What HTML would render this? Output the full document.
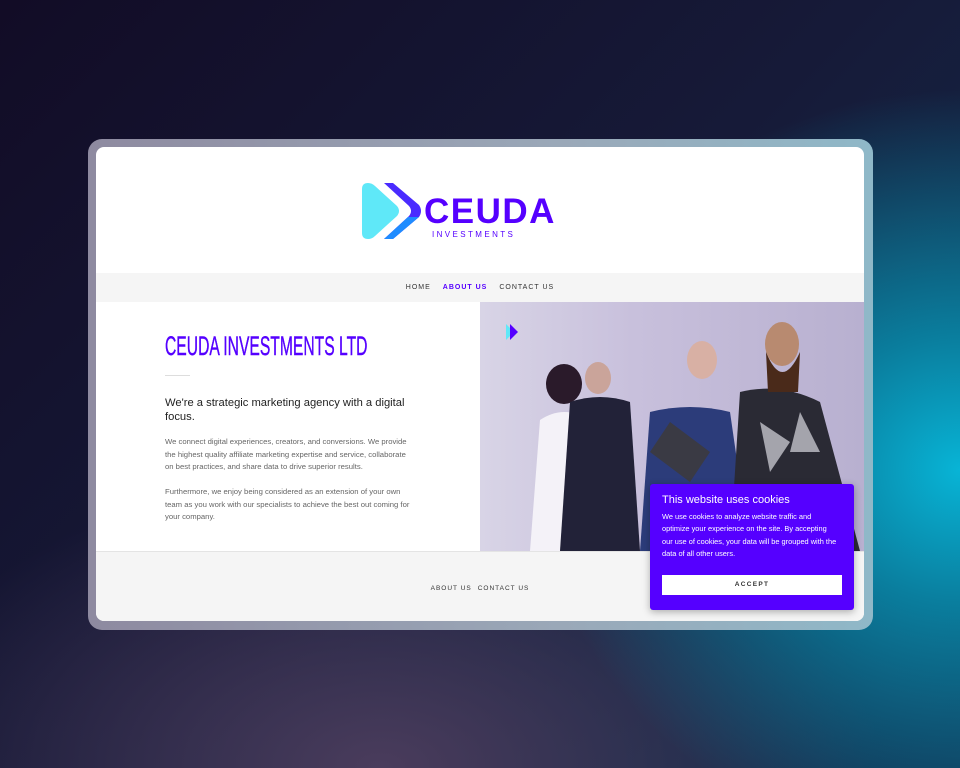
<!DOCTYPE html>
<html><head><meta charset="utf-8"><style>
*{margin:0;padding:0;box-sizing:border-box}
body{width:960px;height:768px;overflow:hidden;font-family:"Liberation Sans",sans-serif;
background:radial-gradient(ellipse 420px 380px at 960px 470px,#08b4d6 0%,#0a7e9e 35%,rgba(16,40,70,0) 100%),radial-gradient(ellipse 500px 300px at 380px 768px,#4a3c5c 0%,rgba(40,30,60,0) 100%),linear-gradient(135deg,#120c26 0%,#161a38 50%,#123050 100%);position:relative}
.frame{position:absolute;left:88px;top:139px;width:785px;height:491px;border-radius:14px;background:linear-gradient(90deg,#8e8aa0,#9aa8b8 60%,#8fb8c8)}
.page{position:absolute;left:96px;top:147px;width:768px;height:474px;border-radius:8px;background:#fff;overflow:hidden}
.nav{position:absolute;top:126px;left:0;width:768px;height:29px;background:#f5f5f5;font-size:7px;letter-spacing:1px;color:#333;text-align:center;line-height:29px}
.nav span{margin:0 6px}
h1{position:absolute;left:69px;top:184px;font-family:"Liberation Sans Narrow","Liberation Sans",sans-serif;font-weight:normal;color:#5500ff;font-size:27px;transform:scaleX(.58);transform-origin:left;white-space:nowrap;-webkit-text-stroke:.4px #5500ff}
.rule{position:absolute;left:69px;top:228px;width:25px;height:1px;background:#ddd}
.lead{position:absolute;left:69px;top:249px;width:250px;font-size:11.2px;line-height:14px;color:#222}
.p{position:absolute;left:69px;width:250px;font-size:7.7px;line-height:12.5px;color:#666}
.photo{position:absolute;left:384px;top:155px;width:384px;height:249px;background:linear-gradient(90deg,#d8d4e6,#c8c0dc 40%,#b8b0d0);overflow:hidden}
.foot{position:absolute;top:404px;left:0;width:768px;height:70px;background:#f5f5f5;border-top:1px solid #e4e4e4;font-size:6.5px;letter-spacing:1px;color:#333;text-align:center;line-height:74px}
.cookie{position:absolute;left:650px;top:484px;width:204px;height:126px;background:#5500ff;border-radius:3px;color:#fff;padding:10px 16px 10px 12px;box-shadow:0 2px 8px rgba(0,0,0,.3)}
.cookie h3{font-weight:normal;font-size:11px;margin-bottom:5px}
.cookie p{font-size:7.4px;line-height:12.3px}
.btn{position:absolute;left:12px;top:91px;width:180px;height:20px;background:#fff;color:#333;font-size:6.5px;font-weight:bold;letter-spacing:1.3px;text-align:center;line-height:20px}
</style></head><body>
<div class="frame"></div>
<div class="page">
 <svg style="position:absolute;left:266px;top:36px" width="200" height="56" viewBox="0 0 200 56">
  <path d="M6 0q4 0 7 3l22 20q4 5 0 10L13 53q-3 3-7 3q-6 0-6-6V6q0-6 6-6z" fill="#5fe8f8"/>
  <path d="M22 0h9l26 22q4 6 0 12L31 56h-9l25-23q4-5 0-10z" fill="#4a2bff"/>
  <path d="M22 56l24-22h11L31 56z" fill="#1f8cff"/>
  <text x="62" y="40" font-family="Liberation Sans" font-weight="bold" font-size="35" letter-spacing="1.5" fill="#5500ff">CEUDA</text>
  <text x="70" y="54" font-family="Liberation Sans" font-size="8" letter-spacing="2.4" fill="#5500ff">INVESTMENTS</text>
 </svg>
 <div class="nav"><span>HOME</span><span style="color:#5500ff;font-weight:bold">ABOUT US</span><span>CONTACT US</span></div>
 <h1>CEUDA INVESTMENTS LTD</h1>
 <div class="rule"></div>
 <div class="lead">We're a strategic marketing agency with a digital focus.</div>
 <div class="p" style="top:289px">We connect digital experiences, creators, and conversions. We provide the highest quality affiliate marketing expertise and service, collaborate on best practices, and share data to drive superior results.</div>
 <div class="p" style="top:339px">Furthermore, we enjoy being considered as an extension of your own team as you work with our specialists to achieve the best out coming for your company.</div>
 <div class="photo">
  <svg width="384" height="249" viewBox="0 0 384 249">
   <path d="M26 22l8 8-8 8z" fill="#5fe8f8"/><path d="M30 22l8 8-8 8z" fill="#5500ff"/>
   <ellipse cx="84" cy="82" rx="18" ry="20" fill="#2a1a2a"/>
   <path d="M60 118q24-16 50 0l6 131H50z" fill="#f4f2f8"/>
   <path d="M90 100q30-10 60 0l10 149H80z" fill="#222238"/>
   <ellipse cx="118" cy="76" rx="13" ry="16" fill="#caa49a"/>
   <path d="M170 110q40-10 80 0l20 139H160z" fill="#2c3c7a"/>
   <ellipse cx="222" cy="58" rx="15" ry="19" fill="#d8b0a4"/>
   <path d="M260 90q40-10 80 10l40 149H250z" fill="#2a2a34"/>
   <path d="M280 120l30 20-20 30z M320 110l20 40-30 0z" fill="#d8d8e0" opacity=".7"/>
   <ellipse cx="302" cy="42" rx="17" ry="22" fill="#b88a70"/>
   <path d="M286 50q16 40 34 0l-2 40h-30z" fill="#4a2a1a"/>
   <path d="M190 120l40 30-20 30-40-30z" fill="#3a3a44"/>
  </svg>
 </div>
 <div class="foot"><span style="margin:0 3px">ABOUT US</span><span style="margin:0 3px">CONTACT US</span></div>
</div>
<div class="cookie"><h3>This website uses cookies</h3><p>We use cookies to analyze website traffic and optimize your experience on the site. By accepting our use of cookies, your data will be grouped with the data of all other users.</p><div class="btn">ACCEPT</div></div>
</body></html>
